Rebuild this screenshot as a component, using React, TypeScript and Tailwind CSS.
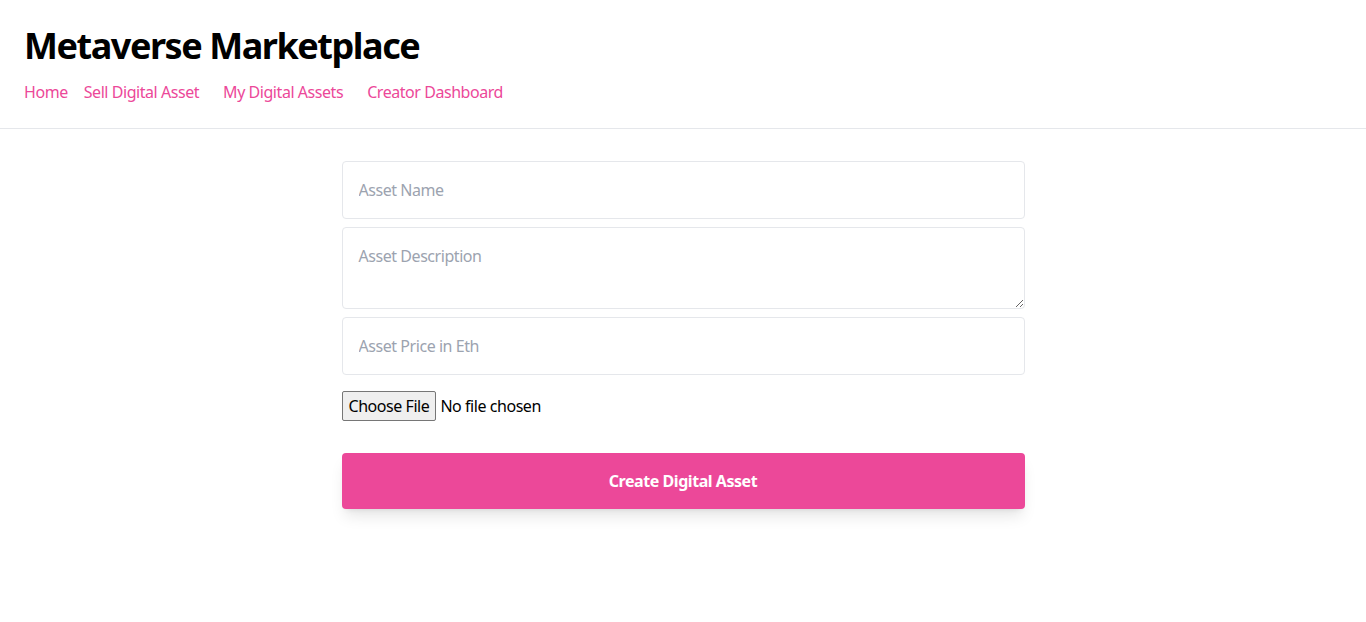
import React from "react";

export default function App() {
  return (
    <div className="min-h-screen bg-white text-black tracking-[-0.028em]" style={{ fontFamily: '"Noto Sans", "Open Sans", sans-serif' }}>
      <nav className="border-b border-[#e5e7eb] p-6">
        <p className="mt-[2px] text-4xl font-bold leading-[40px] tracking-[-1.45px]">Metaverse Marketplace</p>
        <div className="mt-[14px] flex">
          <a className="mr-4 text-[#ec4899]">Home</a>
          <a className="mr-6 text-[#ec4899]">Sell Digital Asset</a>
          <a className="mr-6 text-[#ec4899]">My Digital Assets</a>
          <a className="mr-6 text-[#ec4899]">Creator Dashboard</a>
        </div>
      </nav>
      <div className="flex justify-center">
        <div className="flex w-1/2 flex-col pb-12">
          <input
            placeholder="Asset Name"
            className="mt-8 rounded border border-[#e5e7eb] p-4 outline-none placeholder:text-[#9ca3af]"
          />
          <textarea
            placeholder="Asset Description"
            className="mt-2 h-[82px] rounded border border-[#e5e7eb] p-4 outline-none placeholder:text-[#9ca3af]"
          />
          <input
            placeholder="Asset Price in Eth"
            className="mt-2 rounded border border-[#e5e7eb] p-4 outline-none placeholder:text-[#9ca3af]"
          />
          <input
            type="file"
            name="Asset"
            className="my-4 file:mr-1 file:rounded-[2px] file:border file:border-[#767676] file:bg-[#efefef] file:px-[6px] file:py-[2px] file:text-black"
          />
          <button className="mt-4 rounded bg-[#ec4899] p-4 font-bold text-white shadow-lg">
            Create Digital Asset
          </button>
        </div>
      </div>
    </div>
  );
}
